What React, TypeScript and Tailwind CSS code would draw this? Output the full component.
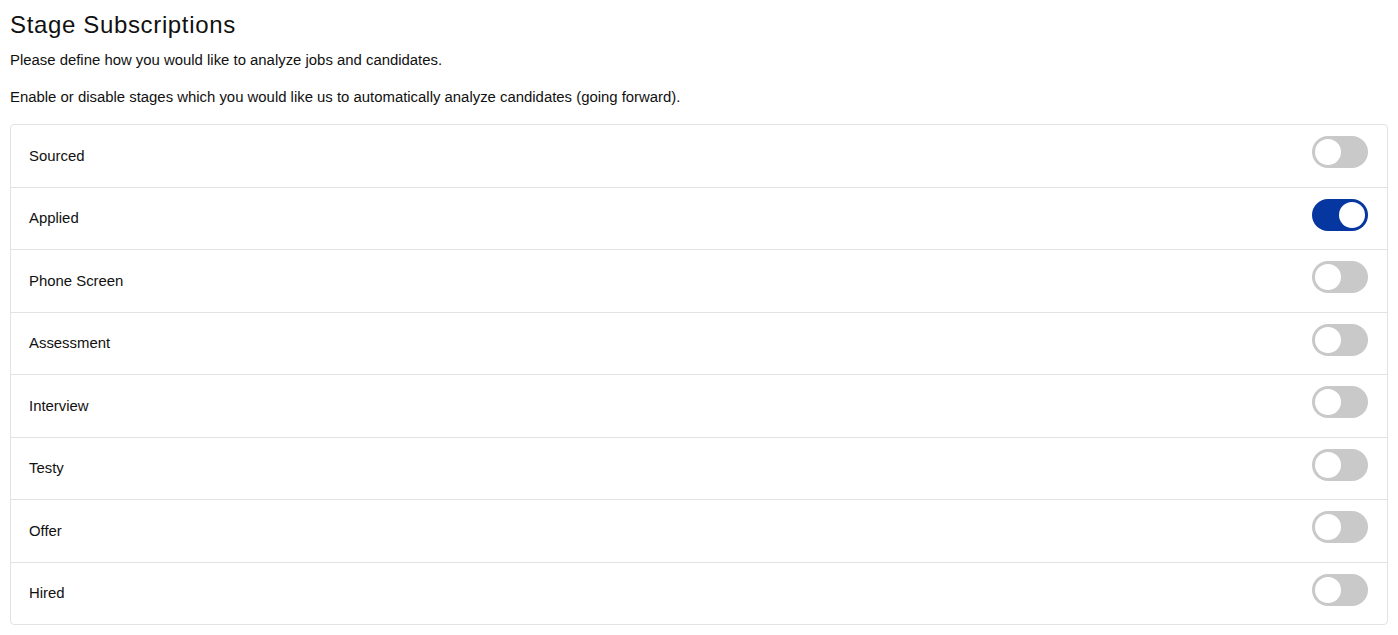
const stages = [
  { name: "Sourced", on: false },
  { name: "Applied", on: true },
  { name: "Phone Screen", on: false },
  { name: "Assessment", on: false },
  { name: "Interview", on: false },
  { name: "Testy", on: false },
  { name: "Offer", on: false },
  { name: "Hired", on: false },
];

function Toggle({ on }: { on: boolean }) {
  return (
    <div
      className={
        on
          ? "w-[56px] h-[32px] mb-[7px] rounded-full bg-[#06369f] p-[3px] flex justify-end"
          : "w-[56px] h-[32px] mb-[7px] rounded-full bg-[#c9c9c9] p-[3px] flex justify-start"
      }
    >
      <div className="w-[26px] h-[26px] rounded-full bg-white" />
    </div>
  );
}

export default function App() {
  return (
    <div
      className="bg-white text-[#111] px-[10px] pt-[10px] min-h-screen"
      style={{ fontFamily: '"Liberation Sans", Arial, sans-serif' }}
    >
      <h1 className="text-[24px] leading-[29px] tracking-[0.65px]">Stage Subscriptions</h1>
      <p className="text-[14.9px] leading-[18px] mt-[12px]">
        Please define how you would like to analyze jobs and candidates.
      </p>
      <p className="text-[14.9px] leading-[18px] mt-[19px]">
        Enable or disable stages which you would like us to automatically analyze candidates (going forward).
      </p>
      <div className="mt-[18px] w-[1378px] border border-[#e3e3e3] rounded-[4px]">
        {stages.map((s, i) => (
          <div
            key={s.name}
            className={
              i === 0
                ? "h-[61.5px] flex items-center justify-between pl-[18px] pr-[19px]"
                : "h-[62.5px] flex items-center justify-between pl-[18px] pr-[19px] border-t border-[#e3e3e3]"
            }
          >
            <span className="text-[14.9px]">{s.name}</span>
            <Toggle on={s.on} />
          </div>
        ))}
      </div>
    </div>
  );
}
